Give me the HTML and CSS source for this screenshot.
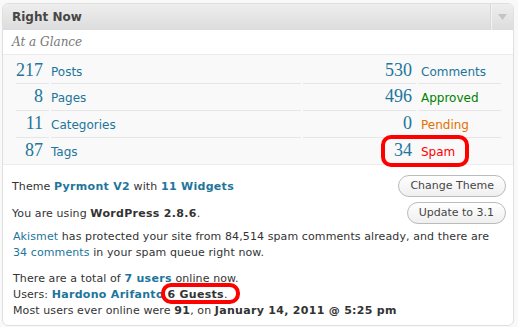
FILE: index.html
```
<!DOCTYPE html>
<html>
<head>
<meta charset="utf-8">
<link rel="stylesheet" href="styles.css">
</head>
<body>
<div class="panel">
  <div class="hd">
    <h3 class="title">Right Now</h3>
    <div class="toggle"><svg width="9" height="6" viewBox="0 0 9 6"><polygon points="0,0 9,0 4.5,6" fill="#c4c4c4"/></svg></div>
  </div>
  <p class="sub">At a Glance</p>
  <div class="table">
    <table>
      <colgroup><col class="c1"><col class="c2"><col class="c3"><col class="c4"></colgroup>
      <tr class="first">
        <td class="b">217</td><td class="t">Posts</td>
        <td class="b">530</td><td class="t">Comments</td>
      </tr>
      <tr>
        <td class="b">8</td><td class="t">Pages</td>
        <td class="b">496</td><td class="t approved">Approved</td>
      </tr>
      <tr>
        <td class="b">11</td><td class="t">Categories</td>
        <td class="b">0</td><td class="t pending">Pending</td>
      </tr>
      <tr>
        <td class="b">87</td><td class="t">Tags</td>
        <td class="b">34</td><td class="t spam">Spam</td>
      </tr>
    </table>
  </div>
  <div class="versions">
    <div class="vrow">
      <span>Theme <a class="strong">Pyrmont V2</a> with <a class="strong">11 Widgets</a></span>
      <span class="button">Change Theme</span>
    </div>
    <div class="vrow">
      <span>You are using <b>WordPress 2.8.6</b>.</span>
      <span class="button">Update to 3.1</span>
    </div>
    <p class="akismet"><a>Akismet</a> has protected your site from 84,514 spam comments already, and there are<br><a>34 comments</a> in your spam queue right now.</p>
    <p class="online">There are a total of <a class="strong">7 users</a> online now.<br>Users: <a class="strong">Hardono Arifanto</a> <span class="circled"><b>6 Guests</b>.</span><br>Most users ever online were <b>91</b>, on <b>January 14, 2011 @ 5:25 pm</b></p>
  </div>
  <div class="mark mark-spam"></div>
</div>
</body>
</html>
```
FILE: styles.css
```
html, body {
  margin: 0;
  padding: 0;
  background: #f9f9f9;
}
body {
  font-family: "DejaVu Sans", Verdana, sans-serif;
  font-size: 11px;
  letter-spacing: 0.1px;
  color: #333;
}
.panel {
  position: relative;
  margin: 3px 0 0 2px;
  width: 510px;
  border: 1px solid #dfdfdf;
  border-radius: 6px;
  background: #fff;
}
.hd {
  display: flex;
  height: 26px;
  background: linear-gradient(#eeeeee, #dcdcdc);
  border-radius: 5px 5px 0 0;
}
.title {
  flex: 1;
  margin: 0;
  padding-left: 9px;
  font-family: "DejaVu Sans", Verdana, sans-serif;
  font-weight: bold;
  font-size: 12px;
  letter-spacing: 0;
  line-height: 26px;
  color: #464646;
}
.toggle {
  width: 21px;
  border-left: 1px solid #f4f4f4;
  box-shadow: -1px 0 0 #d8d8d8;
  display: flex;
  align-items: center;
  justify-content: center;
}
.sub {
  margin: 0;
  height: 24px;
  line-height: 24px;
  padding-left: 9px;
  font-family: "DejaVu Serif", Georgia, serif;
  font-style: italic;
  font-size: 12px;
  letter-spacing: 0;
  color: #777;
  border-bottom: 1px solid #ececec;
}
.table {
  background: #f9f9f9;
  padding: 0 10px 0 11px;
  border-bottom: 1px solid #ececec;
}
.table table {
  width: 100%;
  border-collapse: separate;
  border-spacing: 2px 0;
  table-layout: fixed;
  letter-spacing: 0;
}
.c1 { width: 33px; }
.c2 { width: 250px; }
.c3 { width: 113px; }
.table td {
  padding: 2px 0 0;
  height: 24px;
  vertical-align: baseline;
  border-top: 1px solid #e6e6e6;
  white-space: nowrap;
}
.table tr.first td {
  border-top: 0;
  padding-top: 5px;
  height: 23px;
}
.table td.b {
  text-align: right;
  font-family: "Liberation Serif", Georgia, serif;
  font-size: 18px;
  line-height: 20px;
  color: #21759b;
  padding-right: 6px;
}
.table td:nth-child(3) { padding-right: 4px; }
.table td:nth-child(4) { padding-left: 3px; }
.table td.t {
  font-size: 12px;
  line-height: 20px;
  color: #21759b;
}
.table td.approved { color: #008000; }
.table td.pending { color: #e66f00; }
.table td.spam { color: #ff0000; }
.versions {
  padding: 10px 7px 6px 9px;
}
.vrow {
  display: flex;
  justify-content: space-between;
  align-items: center;
  margin-bottom: 5px;
}
a {
  color: #21759b;
  text-decoration: none;
}
a.strong, b {
  font-weight: bold;
  letter-spacing: 0.3px;
}
.button {
  display: block;
  height: 20px;
  line-height: 20px;
  padding: 0 11px;
  border: 1px solid #bbb;
  border-radius: 11px;
  background: linear-gradient(#ffffff, #efefef);
  color: #464646;
  letter-spacing: 0;
}
.akismet {
  margin: 0 0 0 1px;
  line-height: 16px;
}
.online {
  margin: 10px 0 0 1px;
  line-height: 16px;
}
.circled {
  position: relative;
}
.circled::after {
  content: "";
  position: absolute;
  left: -6px;
  right: -12px;
  top: -5px;
  bottom: -3px;
  border: 4px solid #f00;
  border-radius: 10px;
}
.mark {
  position: absolute;
  border: 4px solid #f00;
  border-radius: 10px;
  box-sizing: border-box;
}
.mark-spam {
  left: 378px;
  top: 131px;
  width: 88px;
  height: 32px;
}
```
